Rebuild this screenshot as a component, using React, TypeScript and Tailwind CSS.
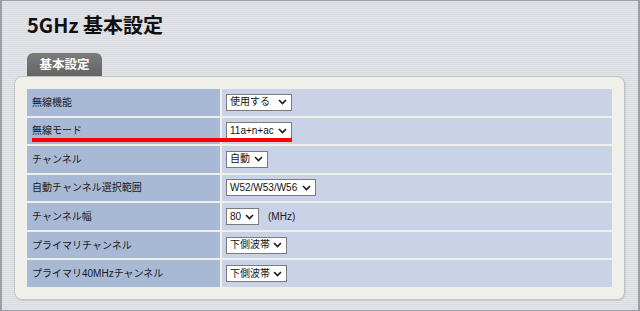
import React from 'react';

interface SettingRow {
  label: string;
  value: string;
  width: number;
  unit?: string;
}

const rows: SettingRow[] = [
  { label: '無線機能', value: '使用する', width: 66 },
  { label: '無線モード', value: '11a+n+ac', width: 66 },
  { label: 'チャンネル', value: '自動', width: 42 },
  { label: '自動チャンネル選択範囲', value: 'W52/W53/W56', width: 90 },
  { label: 'チャンネル幅', value: '80', width: 33, unit: '(MHz)' },
  { label: 'プライマリチャンネル', value: '下側波帯', width: 61 },
  { label: 'プライマリ40MHzチャンネル', value: '下側波帯', width: 61 },
];

const Chevron = () => (
  <svg width="9" height="6" viewBox="0 0 9 6" className="shrink-0">
    <path d="M1 1 L4.5 4.5 L8 1" fill="none" stroke="#1a1a1a" strokeWidth="1.6" />
  </svg>
);

const FakeSelect: React.FC<{ value: string; width: number }> = ({ value, width }) => (
  <div
    className="flex items-center justify-between h-[17px] bg-white border border-[#7a7a7a] pl-[3px] pr-[4px] text-[10px] text-[#111] leading-none"
    style={{ width }}
  >
    <span className="whitespace-nowrap">{value}</span>
    <Chevron />
  </div>
);

const App: React.FC = () => {
  return (
    <div className="w-[640px] h-[311px] overflow-hidden border-x-2 border-y border-[#9c9ea3] bg-[repeating-linear-gradient(180deg,#e3e5e9_0px,#e3e5e9_1px,#d9dbe0_1px,#d9dbe0_2px)] font-['Liberation_Sans','Noto_Sans_CJK_JP',sans-serif]">
      <h1 className="pl-[25px] pt-[13px] h-[52px] text-[20px] leading-[22px] font-bold text-[#111] font-['Noto_Sans_CJK_JP',sans-serif]">
        5GHz 基本設定
      </h1>
      <div className="pl-[25px] flex">
        <div className="w-[75px] h-[23px] rounded-t-[6px] bg-gradient-to-b from-[#7c7c7c] to-[#646464] flex items-center justify-center text-white text-[12.5px] font-bold font-['Noto_Sans_CJK_JP',sans-serif]">
          基本設定
        </div>
      </div>
      <div className="ml-[12px] w-[611px] h-[224px] rounded-[8px] border border-[#c2c3c3] bg-[#f0f0ea] p-[12px] shadow-[1px_1px_1px_rgba(0,0,0,0.08)]">
        <div className="relative grid grid-rows-7 gap-[2px] h-[198px]">
          {rows.map(row => (
            <div key={row.label} className="grid grid-cols-[193px_1fr] gap-[2px]">
              <div className="bg-[#a8b9d5] flex items-center pl-[5px] text-[10px] text-[#1a1a1a] whitespace-nowrap">
                {row.label}
              </div>
              <div className="bg-[#cad2e7] flex items-center pl-[4px] gap-[9px] text-[10px] text-[#1a1a1a]">
                <FakeSelect value={row.value} width={row.width} />
                {row.unit && <span>{row.unit}</span>}
              </div>
            </div>
          ))}
          <div className="absolute left-[5px] top-[49px] w-[260px] h-[4px] bg-[#ff0000]" />
        </div>
      </div>
    </div>
  );
};

export default App;
